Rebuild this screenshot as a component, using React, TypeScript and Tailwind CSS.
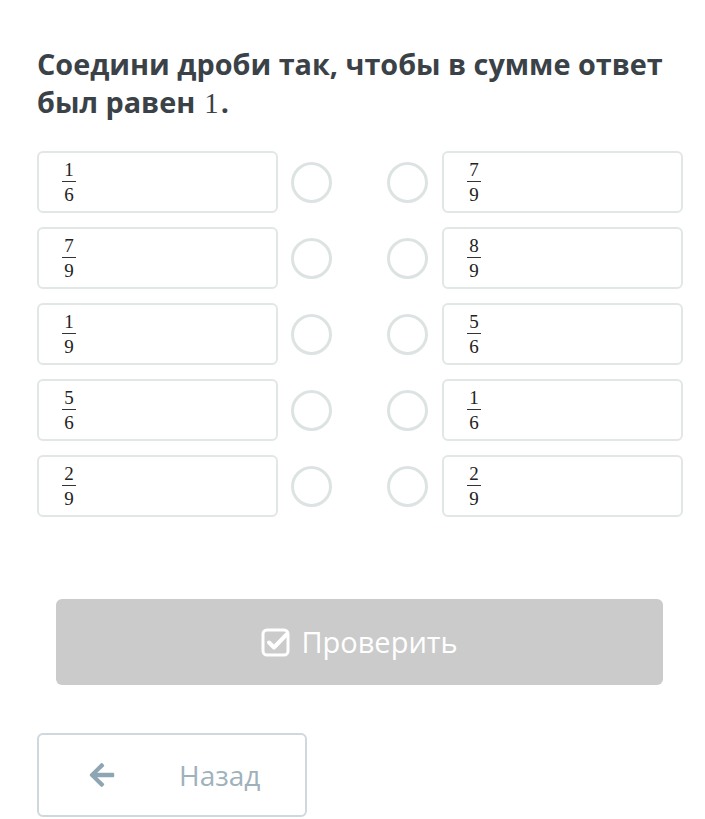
import React from 'react';
import { FaArrowLeft } from 'react-icons/fa';

type Frac = [number, number];

const left: Frac[] = [[1, 6], [7, 9], [1, 9], [5, 6], [2, 9]];
const right: Frac[] = [[7, 9], [8, 9], [5, 6], [1, 6], [2, 9]];

function Fraction({ n, d }: { n: number; d: number }) {
  return (
    <span className="inline-flex flex-col items-center font-['Liberation_Serif',serif] text-[19px] leading-[17px] text-[#222]">
      <span className="pb-[3px]">{n}</span>
      <span className="w-[14px] border-t border-[#333]" />
      <span className="pt-[4px]">{d}</span>
    </span>
  );
}

function Box({ f }: { f: Frac }) {
  return (
    <div className="flex h-[62px] w-[241px] items-center rounded-md border-2 border-[#e1e6e6] bg-white pl-[23px]">
      <Fraction n={f[0]} d={f[1]} />
    </div>
  );
}

function Dot() {
  return <div className="h-[41px] w-[41px] rounded-full border-[3px] border-[#dde3e3]" />;
}

function CheckIcon() {
  return (
    <svg width="30" height="30" viewBox="0 0 30 30" fill="none">
      <rect x="2" y="3" width="25" height="25" rx="4" stroke="white" strokeWidth="3" />
      <path d="M8 15.5l5 5L26 7" stroke="white" strokeWidth="4" strokeLinecap="round" strokeLinejoin="round" />
    </svg>
  );
}

export default function App() {
  return (
    <div className="min-h-screen w-[705px] bg-white font-['Open_Sans',sans-serif]">
      <div className="pl-[37px] pr-[22px] pt-[45px]">
        <h1 className="pr-[14px] text-[28.8px] font-bold leading-[38px] text-[#3a4248]">
          Соедини дроби так, чтобы в сумме ответ был равен
          <span className="ml-[9px] inline-block font-['Liberation_Serif',serif] font-normal">1</span>
          <span className="ml-[2px] inline-block">.</span>
        </h1>

        {/* --- PAIRS --- */}
        <div className="mt-[29px] flex justify-between">
          <div className="flex flex-col gap-[14px]">
            {left.map((f, i) => (
              <div key={i} className="flex items-center gap-[13px]">
                <Box f={f} />
                <Dot />
              </div>
            ))}
          </div>
          <div className="flex flex-col gap-[14px]">
            {right.map((f, i) => (
              <div key={i} className="flex items-center gap-[14px]">
                <Dot />
                <Box f={f} />
              </div>
            ))}
          </div>
        </div>

        {/* --- CHECK --- */}
        <div className="mt-[82px] pl-[19px] pr-[20px]">
          <button className="flex h-[86px] w-full items-center justify-center gap-[10px] rounded-md bg-[#cbcbcb] text-[29px] text-white">
            <CheckIcon />
            <span>Проверить</span>
          </button>
        </div>

        {/* --- BACK --- */}
        <button className="mt-[48px] flex h-[84px] w-[270px] items-center gap-[63px] rounded-md border-2 border-[#cfd8dc] pl-[49px] text-[28px] text-[#9fb2bb]">
          <FaArrowLeft size={28} className="text-[#8ea6b3]" />
          <span>Назад</span>
        </button>
      </div>
    </div>
  );
}
